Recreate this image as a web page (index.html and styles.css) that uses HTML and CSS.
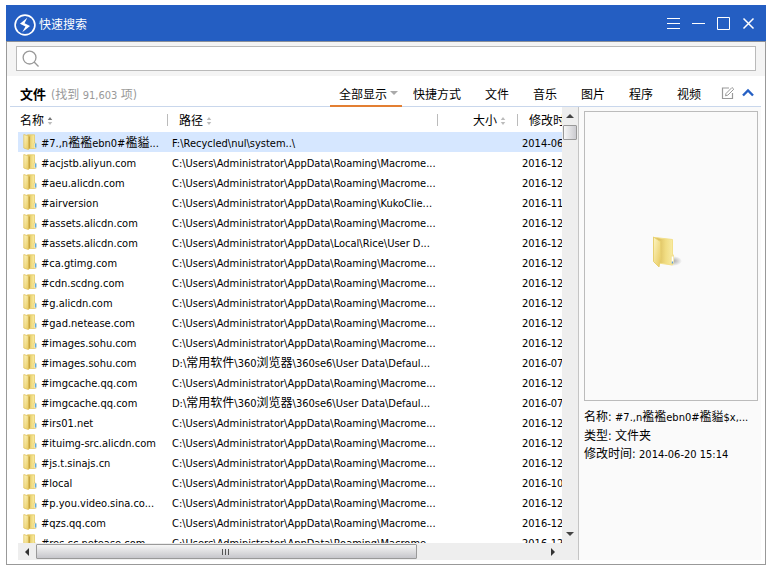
FILE: index.html
```html
<!DOCTYPE html>
<html lang="zh-CN">
<head>
    <meta charset="UTF-8">
    <meta name="viewport" content="width=device-width, initial-scale=1.0">
    <title>快速搜索</title>
    <link rel="stylesheet" href="styles.css">
</head>
<body>
    <!-- 文件夹图标 -->
    <svg class="sprite" aria-hidden="true">
        <defs>
            <linearGradient id="folderFront" x1="0" y1="0" x2="1" y2="1">
                <stop offset="0" stop-color="#fdf6c4"/>
                <stop offset="1" stop-color="#e8c95e"/>
            </linearGradient>
            <linearGradient id="folderBack" x1="0" y1="0" x2="1" y2="0">
                <stop offset="0" stop-color="#d2b04c"/>
                <stop offset=".6" stop-color="#f0dc82"/>
                <stop offset="1" stop-color="#f8eba2"/>
            </linearGradient>
            <radialGradient id="folderShadow">
                <stop offset="0" stop-color="#555" stop-opacity=".5"/>
                <stop offset="1" stop-color="#555" stop-opacity="0"/>
            </radialGradient>
        </defs>
        <symbol id="folder" viewBox="0 0 14 16">
            <path d="M4.500 .8H11.500V14.500H5z" fill="url(#folderBack)" stroke="#e4ca66" stroke-width=".8"/>
            <path d="M.8 .5L5.500 2V15.600L.8 14z" fill="url(#folderFront)" stroke="#dfc25c" stroke-width=".8"/>
            <path d="M6.300 2.500V14.500" stroke="#b8922e" stroke-width=".8"/>
            <path d="M11 9H13V14.500H11z" fill="#f9f1c4" stroke="#dfc76e" stroke-width=".5"/>
            <path d="M12.700 9.500V13.500" stroke="#4aa5ee" stroke-width="1.200"/>
        </symbol>
        <symbol id="folderLarge" viewBox="1 1 40 40">
            <ellipse cx="23" cy="26" rx="9" ry="5" fill="url(#folderShadow)"/>
            <path d="M5 2.500L22.500 4.500V30L8 28z" fill="url(#folderBack)" stroke="#f3e08a"/>
            <path d="M20.500 20.500L24 19.500V29L20.500 30z" fill="#f3e196"/>
            <path d="M22.500 21.500V28" stroke="#fff" stroke-width="1.600"/>
            <path d="M22.500 26.500V28.500" stroke="#5b9bd0" stroke-width="1.400"/>
            <path d="M3.500 2L10.500 6.500V22L9 32L3.500 26.500z" fill="url(#folderFront)" stroke="#e8d070"/>
        </symbol>
    </svg>

    <div class="window">
        <header class="titlebar">
            <svg class="logo" viewBox="0 0 24 24" aria-hidden="true">
                <circle cx="12" cy="12" r="10.800" fill="none" stroke="#fff" stroke-width="1.800"/>
                <path d="M14.500 4L6.500 10.500L12.500 13.500L9 20L17.500 13L11.500 10z" fill="#fff"/>
            </svg>
            <h1>快速搜索</h1>
            <div class="window-buttons">
                <button aria-label="菜单"><svg viewBox="0 0 13 13"><path d="M0 1.500H13M0 6.500H13M0 11.500H13"/></svg></button>
                <button aria-label="最小化"><svg viewBox="0 0 13 13"><path d="M0 6.500H13"/></svg></button>
                <button aria-label="最大化"><svg viewBox="0 0 13 13"><path d="M.5 .5H12.500V12.500H.5z"/></svg></button>
                <button aria-label="关闭"><svg viewBox="0 0 13 13"><path d="M1.500 1.500L11.500 11.500M11.500 1.500L1.500 11.500" stroke-width="1.500"/></svg></button>
            </div>
        </header>

        <div class="search">
            <label class="search-box">
                <svg viewBox="0 0 18 18" aria-hidden="true"><circle cx="8" cy="8" r="6.800"/><path d="M12.800 12.800L17.500 17.500"/></svg>
                <input type="text" aria-label="搜索">
            </label>
        </div>

        <div class="filter">
            <h2>文件</h2>
            <span class="count">(找到 <span class="latin">91,603</span> 项)</span>
            <nav class="tabs">
                <button class="tab active">全部显示<span class="arrow"></span></button>
                <button class="tab">快捷方式</button>
                <button class="tab">文件</button>
                <button class="tab">音乐</button>
                <button class="tab">图片</button>
                <button class="tab">程序</button>
                <button class="tab">视频</button>
            </nav>
            <div class="tools">
                <button aria-label="编辑"><svg viewBox="0 0 14 14"><path d="M8 2H1.500V12.500H11.500V7" stroke="#999" stroke-width="1.200"/><path d="M4.500 9.800L5 7.500L11 1.500L12.800 3.200L6.800 9.200z" stroke="#999"/></svg></button>
                <button aria-label="收起"><svg viewBox="0 0 14 14"><path d="M2 9.500L7 4.500L12 9.500" stroke="#2660c4" stroke-width="2.400"/></svg></button>
            </div>
        </div>

        <main class="content">
            <section class="list">
                <div class="rows">
                    <table>
                        <colgroup>
                            <col class="col-name">
                            <col class="col-path">
                            <col class="col-size">
                            <col class="col-date">
                        </colgroup>
                        <thead>
                            <tr>
                                <th>名称<span class="sort asc"></span></th>
                                <th>路径<span class="sort"></span></th>
                                <th class="size">大小<span class="sort"></span></th>
                                <th>修改时间</th>
                            </tr>
                        </thead>
                        <tbody id="fileRows"></tbody>
                    </table>
                </div>
                <div class="vscroll">
                    <button class="up" aria-label="向上"></button>
                    <div class="thumb"></div>
                    <button class="down" aria-label="向下"></button>
                </div>
                <div class="hscroll">
                    <button class="left" aria-label="向左"></button>
                    <div class="thumb"><i></i><i></i><i></i></div>
                    <button class="right" aria-label="向右"></button>
                </div>
            </section>
            <aside class="detail">
                <div class="preview">
                    <svg><use href="#folderLarge"/></svg>
                </div>
                <p>名称: <span class="latin">#7.,n<b>襤襤</b>ebn0#<b>襤貖</b>$x,...</span></p>
                <p>类型: 文件夹</p>
                <p>修改时间: <span class="latin">2014-06-20 15:14</span></p>
            </aside>
        </main>
    </div>

    <script>
        const roaming = 'C:\\Users\\Administrator\\AppData\\Roaming\\Macrome...';
        const files = [
            ['#7.,n襤襤ebn0#襤貖...', 'F:\\Recycled\\nul\\system..\\', '2014-06'],
            ['#acjstb.aliyun.com', roaming, '2016-12'],
            ['#aeu.alicdn.com', roaming, '2016-12'],
            ['#airversion', 'C:\\Users\\Administrator\\AppData\\Roaming\\KukoClie...', '2016-11'],
            ['#assets.alicdn.com', roaming, '2016-12'],
            ['#assets.alicdn.com', 'C:\\Users\\Administrator\\AppData\\Local\\Rice\\User D...', '2016-12'],
            ['#ca.gtimg.com', roaming, '2016-12'],
            ['#cdn.scdng.com', roaming, '2016-12'],
            ['#g.alicdn.com', roaming, '2016-12'],
            ['#gad.netease.com', roaming, '2016-12'],
            ['#images.sohu.com', roaming, '2016-12'],
            ['#images.sohu.com', 'D:\\常用软件\\360浏览器\\360se6\\User Data\\Defaul...', '2016-07'],
            ['#imgcache.qq.com', roaming, '2016-12'],
            ['#imgcache.qq.com', 'D:\\常用软件\\360浏览器\\360se6\\User Data\\Defaul...', '2016-07'],
            ['#irs01.net', roaming, '2016-12'],
            ['#ituimg-src.alicdn.com', roaming, '2016-12'],
            ['#js.t.sinajs.cn', roaming, '2016-12'],
            ['#local', roaming, '2016-10'],
            ['#p.you.video.sina.co...', roaming, '2016-12'],
            ['#qzs.qq.com', roaming, '2016-12'],
            ['#res.cc.netease.com', roaming, '2016-12']
        ];

        // 汉字比英文大一号
        function mark(text) {
            return text.replace(/[\u4e00-\u9fff]+/g, '<b>$&</b>');
        }

        document.getElementById('fileRows').innerHTML = files
            .map(([name, path, date], i) => `
                <tr class="${i === 0 ? 'selected' : ''}">
                    <td class="name"><div><svg><use href="#folder"/></svg><span>${mark(name)}</span></div></td>
                    <td>${mark(path)}</td>
                    <td></td>
                    <td>${date}</td>
                </tr>
            `)
            .join('');
    </script>
</body>
</html>
```
FILE: styles.css
```css
* {
    box-sizing: border-box;
}

body {
    margin: 0;
    padding: 5px 5px 6px 6px;
    height: 100vh;
    background: #fff;
    color: #000;
    font: 12px "DejaVu Sans Condensed", "Noto Sans CJK SC", sans-serif;
}

h1, h2, p {
    margin: 0;
}

button {
    padding: 0;
    border: none;
    background: none;
    color: inherit;
    font: inherit;
    cursor: pointer;
}

b {
    font-size: 12px;
    font-weight: normal;
    line-height: 1;
}

svg {
    display: block;
}

.sprite {
    position: absolute;
    width: 0;
    height: 0;
}

.latin {
    font-size: 11px;
}

.window {
    display: flex;
    flex-direction: column;
    height: 100%;
    border: 1px solid #999;
    border-top: none;
    background: #fff;
}

/* 标题栏 */
.titlebar {
    display: flex;
    align-items: center;
    flex: none;
    height: 37px;
    margin: 0 -1px;
    padding: 0 11px 0 8px;
    background: #245ec2;
    border-bottom: 1px solid #8b9099;
    color: #fff;
}

.logo {
    width: 22px;
    height: 22px;
    margin: 3px 3px 0 0;
}

.titlebar h1 {
    flex: 1;
    font-size: 12px;
    font-weight: normal;
}

.window-buttons {
    display: flex;
    gap: 12px;
}

.window-buttons svg {
    width: 13px;
    height: 13px;
    fill: none;
    stroke: #fff;
}

/* 搜索框 */
.search {
    flex: none;
    height: 34px;
    padding: 4px 9px 5px;
    background: #f4f4f4;
}

.search-box {
    display: flex;
    align-items: center;
    height: 25px;
    padding: 0 5px;
    border: 1px solid #bababa;
    background: #fff;
}

.search-box svg {
    width: 17px;
    height: 17px;
    fill: none;
    stroke: #999;
    stroke-width: 1.4;
}

.search-box input {
    flex: 1;
    margin-left: 6px;
    border: none;
    outline: none;
    font: inherit;
}

/* 分类栏 */
.filter {
    display: flex;
    align-items: center;
    flex: none;
    height: 31px;
    margin: 0 4px 0 3px;
    padding: 4px 6px 0 10px;
    border-bottom: 1px solid #c9d7ec;
}

.filter h2 {
    margin-right: 5px;
    font-size: 13px;
}

.count {
    flex: 1;
    color: #999;
}

.tabs {
    display: flex;
    gap: 24px;
    align-self: stretch;
    margin-right: 20px;
}

.tab {
    height: 27px;
    padding-bottom: 1px;
}

.tab.active {
    display: flex;
    align-items: center;
    gap: 3px;
    margin-right: -13px;
    padding: 1px 4px 0 9px;
    border-bottom: 2px solid #e37f33;
}

.arrow {
    border: 4px solid transparent;
    border-top-color: #aaa;
    border-bottom: none;
}

.tools {
    display: flex;
    gap: 6px;
}

.tools svg {
    width: 14px;
    height: 14px;
    fill: none;
}

/* 列表 */
.content {
    display: flex;
    flex: 1;
    min-height: 0;
    padding-bottom: 4px;
}

.list {
    display: grid;
    grid-template-columns: minmax(0, 1fr) 16px;
    grid-template-rows: minmax(0, 1fr) 17px;
    flex: 1;
    min-width: 0;
    padding-left: 11px;
    background: #fff;
}

.rows {
    overflow: hidden;
}

table {
    width: 640px;
    table-layout: fixed;
    border-collapse: collapse;
    white-space: nowrap;
}

.col-name {
    width: 149px;
}

.col-path {
    width: 270px;
}

.col-size {
    width: 80px;
}

th {
    height: 25px;
    padding: 0 0 0 12px;
    background: linear-gradient(#bbb, #bbb) no-repeat left center / 1px 12px;
    font-weight: normal;
    text-align: left;
}

th:first-child {
    padding-left: 2px;
    background: none;
}

th.size {
    padding: 0 11px 0 0;
    text-align: right;
}

.sort {
    display: inline-block;
    width: 6px;
    height: 8px;
    margin-left: 3px;
    background:
        conic-gradient(from 135deg at 50% 0, #bbb 90deg, transparent 0) no-repeat top / 6px 3px,
        conic-gradient(from -45deg at 50% 100%, #bbb 90deg, transparent 0) no-repeat bottom / 6px 3px;
    clip-path: polygon(50% 0, 100% 50%, 50% 100%, 0 50%);
    background: linear-gradient(#bbb 3px, transparent 3px 5px, #bbb 5px);
}

.sort.asc {
    background: linear-gradient(#777 3px, transparent 3px 5px, #bbb 5px);
}

td {
    height: 20px;
    padding: 3px 0 0 5px;
    font-size: 11px;
    line-height: 17px;
}

td.name {
    padding-top: 0;
}

td.name div {
    display: flex;
    height: 20px;
}

td.name span {
    padding-top: 3px;
}

td svg {
    flex: none;
    width: 14px;
    height: 16px;
    margin: 2px 4px 0 0;
}

.selected {
    background: #d6e7ff;
}

/* 滚动条 */
.vscroll,
.hscroll {
    display: flex;
    align-items: center;
    background: #eee;
}

.vscroll {
    flex-direction: column;
}

.vscroll button {
    width: 16px;
    height: 18px;
}

.vscroll .thumb {
    width: 14px;
    height: 15px;
    border: 1px solid #999;
    border-radius: 1px;
    background: linear-gradient(90deg, #f6f6f6, #cbcbd0);
}

.vscroll .down {
    margin-top: auto;
}

.hscroll {
    grid-column: 1 / -1;
    padding-right: 16px;
}

.hscroll button {
    width: 18px;
    height: 17px;
}

.hscroll .thumb {
    display: flex;
    align-items: center;
    justify-content: center;
    gap: 1px;
    width: 70%;
    height: 15px;
    border: 1px solid #999;
    border-radius: 1px;
    background: linear-gradient(#f6f6f6, #dedee0 50%, #c6c6cb);
}

.hscroll i {
    width: 2px;
    height: 6px;
    border-left: 1px solid #555;
}

.hscroll .right {
    margin-left: auto;
}

.vscroll button::before,
.hscroll button::before {
    content: "";
    display: block;
    width: 0;
    margin: auto;
    border: 4px solid transparent;
}

.vscroll .up::before {
    border-top: none;
    border-bottom-color: #444;
}

.vscroll .down::before {
    border-bottom: none;
    border-top-color: #444;
}

.hscroll .left::before {
    border-left: none;
    border-right-color: #333;
}

.hscroll .right::before {
    border-right: none;
    border-left-color: #333;
}

/* 详情 */
.detail {
    flex: none;
    width: 183px;
    margin-right: 4px;
    padding: 4px 3px 0 5px;
    border-left: 1px solid #c4c4c4;
    background: #fafafa;
    white-space: nowrap;
}

.preview {
    display: flex;
    align-items: center;
    justify-content: center;
    height: 290px;
    margin-bottom: 7px;
    border: 1px solid #bbb;
}

.preview svg {
    width: 40px;
    height: 40px;
}

.detail p {
    line-height: 18px;
}
```
